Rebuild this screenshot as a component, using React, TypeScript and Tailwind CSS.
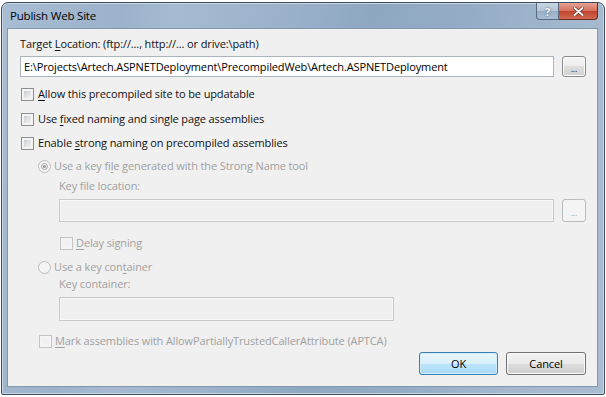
import React from "react";

const U = ({ children }: { children: React.ReactNode }) => (
  <span className="underline decoration-1 underline-offset-[2px]">{children}</span>
);

const Checkbox = ({ disabled }: { disabled?: boolean }) => (
  <span
    className={`flex w-[13px] h-[13px] shrink-0 border p-[2px] ${
      disabled ? "border-[#c4c4c4] bg-[#f4f4f4]" : "border-[#8e8f8f] bg-[#f4f4f4]"
    }`}
  >
    <span
      className={`flex-1 ${
        disabled
          ? "bg-[#f1f1f1]"
          : "bg-[linear-gradient(135deg,#cbcfd5_0%,#e1e3e6_55%,#f3f3f3_100%)]"
      }`}
    />
  </span>
);

const Radio = ({ checked }: { checked?: boolean }) => (
  <span className="flex items-center justify-center w-[13px] h-[13px] shrink-0 rounded-full border border-[#bdbdbd] bg-[#f4f4f4]">
    {checked && (
      <span className="w-[7px] h-[7px] rounded-full border border-[#a9a9a9] flex items-center justify-center">
        <span className="w-[3px] h-[3px] rounded-full bg-[#9a9a9a]" />
      </span>
    )}
  </span>
);

const DotsButton = ({ disabled }: { disabled?: boolean }) => (
  <div
    className={`w-[24px] flex items-center justify-center rounded-[3px] border text-[9px] leading-none pt-[3px] ${
      disabled
        ? "border-[#b8bcbf] bg-[#f4f4f4] text-[#a6a6a6]"
        : "border-[#8a8a8a] bg-[linear-gradient(to_bottom,#f6f6f6_0%,#ececec_50%,#dedede_50%,#d2d2d2_100%)] shadow-[inset_0_0_0_1px_#fbfbfb] text-[#222]"
    }`}
  >
    ...
  </div>
);

export default function App() {
  return (
    <div className="w-[606px] h-[397px] bg-white pt-[2px] pl-[1px] font-['Open_Sans',sans-serif] text-[11px] leading-[16px] tracking-[-0.12px] text-[#111]">
      <div className="w-[604px] h-[393px] flex flex-col rounded-t-[7px] rounded-b-[2px] border border-[#3f4d5e] bg-[linear-gradient(100deg,#a9bdd3_0%,#9bb2ca_18%,#a6bbd1_26%,#9cb3cb_40%,#8fa8c2_55%,#94acc5_70%,#a3b8ce_85%,#a9bcd1_100%)] shadow-[inset_0_0_0_1px_#c9d6e4]">
        {/* Title bar */}
        <div className="h-[25px] flex items-start justify-between shrink-0">
          <div className="pl-[8px] h-[25px] flex items-center text-[11.5px] tracking-[-0.2px] text-[#000]">Publish Web Site</div>
          <div className="flex mr-[6px]">
            <div className="w-[23px] h-[17px] rounded-bl-[4px] border border-t-0 border-[#566a80] bg-[linear-gradient(to_bottom,#c9d6e3_0%,#b3c4d6_50%,#98aec6_50%,#a9bfd4_100%)] flex items-center justify-center text-[11px] font-bold text-white [text-shadow:0_0_2px_#34475c] leading-none">
              ?
            </div>
            <div className="w-[39px] h-[17px] rounded-br-[4px] border border-t-0 border-l-0 border-[#6b2a22] bg-[linear-gradient(to_bottom,#e7a192_0%,#d56f5c_50%,#c0432e_50%,#d16a4f_100%)] flex items-center justify-center">
              <svg width="11" height="9" viewBox="0 0 11 9">
                <path d="M1.5 1 L9.5 8 M9.5 1 L1.5 8" stroke="#5a2018" strokeWidth="3.2" strokeLinecap="round" />
                <path d="M1.5 1 L9.5 8 M9.5 1 L1.5 8" stroke="#ffffff" strokeWidth="2" strokeLinecap="round" />
              </svg>
            </div>
          </div>
        </div>
        {/* Content panel */}
        <div className="flex-1 ml-[5px] mr-[6px] mb-[7px] border border-[#8296ad] bg-[#f0f0f0] pt-[7px] pl-[12px] pr-[11px] flex flex-col">
          <div>
            Target <U>L</U>ocation: (ftp://..., http://... or drive:\path)
          </div>
          <div className="mt-[4px] flex h-[21px] gap-[8px]">
            <div className="flex-1 border border-[#abb3bd] bg-white pl-[3px] flex items-center text-[#000]">
              E:\Projects\Artech.ASPNETDeployment\PrecompiledWeb\Artech.ASPNETDeployment
            </div>
            <DotsButton />
          </div>
          <div className="mt-[9px] flex items-center gap-[4px] h-[16px] pl-[1px]">
            <Checkbox />
            <span><U>A</U>llow this precompiled site to be updatable</span>
          </div>
          <div className="mt-[9px] flex items-center gap-[4px] h-[16px] pl-[1px]">
            <Checkbox />
            <span>Use <U>f</U>ixed naming and single page assemblies</span>
          </div>
          <div className="mt-[8px] flex items-center gap-[4px] h-[16px] pl-[1px]">
            <Checkbox />
            <span>Enable <U>s</U>trong naming on precompiled assemblies</span>
          </div>
          <div className="text-[#a0a0a0]">
            <div className="mt-[7px] flex items-center gap-[3px] h-[16px] pl-[18px]">
              <Radio checked />
              <span>Use a key fi<U>l</U>e generated with the Strong Name tool</span>
            </div>
            <div className="mt-[4px] pl-[39px]">Key file location:</div>
            <div className="mt-[5px] flex h-[23px] gap-[8px] pl-[39px]">
              <div className="flex-1 border border-[#c9c9c9] bg-[#f0f0f0] shadow-[inset_0_0_0_1px_#f7f7f7]" />
              <DotsButton disabled />
            </div>
            <div className="mt-[13px] flex items-center gap-[3px] h-[16px] pl-[40px]">
              <Checkbox disabled />
              <span><U>D</U>elay signing</span>
            </div>
            <div className="mt-[8px] flex items-center gap-[3px] h-[16px] pl-[18px]">
              <Radio />
              <span>Use a key con<U>t</U>ainer</span>
            </div>
            <div className="mt-[1px] pl-[39px]">Key container:</div>
            <div className="mt-[5px] pl-[39px]">
              <div className="w-[335px] h-[24px] border border-[#c9c9c9] bg-[#f0f0f0] shadow-[inset_0_0_0_1px_#f7f7f7]" />
            </div>
            <div className="mt-[12px] flex items-center gap-[3px] h-[16px] pl-[19px]">
              <Checkbox disabled />
              <span><U>M</U>ark assemblies with AllowPartiallyTrustedCallerAttribute (APTCA)</span>
            </div>
          </div>
          <div className="mt-[3px] flex justify-end gap-[8px] text-[#000]">
            <div className="w-[79px] h-[23px] rounded-[3px] border border-[#3c7fb1] bg-[linear-gradient(to_bottom,#eaf6fd_0%,#d9f0fc_50%,#bee6fd_50%,#a7d9f5_100%)] shadow-[inset_0_0_0_1px_#d2ecfa] flex items-center justify-center">
              OK
            </div>
            <div className="w-[80px] h-[23px] rounded-[3px] border border-[#707070] bg-[linear-gradient(to_bottom,#f2f2f2_0%,#ebebeb_50%,#dddddd_50%,#cfcfcf_100%)] shadow-[inset_0_0_0_1px_#fcfcfc] flex items-center justify-center">
              Cancel
            </div>
          </div>
        </div>
      </div>
    </div>
  );
}
